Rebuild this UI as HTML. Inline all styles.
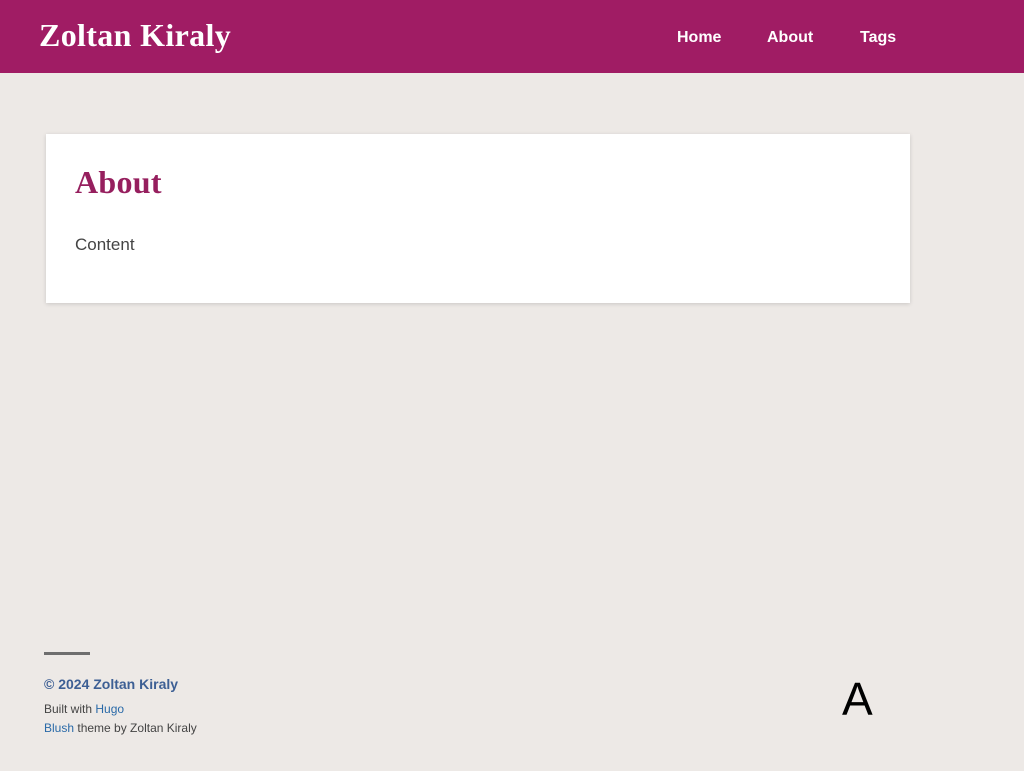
<!DOCTYPE html>
<html><head><meta charset="utf-8"><style>
*{margin:0;padding:0;box-sizing:border-box}
body{width:1024px;height:771px;background:#ede9e6;font-family:"Liberation Sans",sans-serif;position:relative;overflow:hidden}
header{position:absolute;left:0;top:0;width:1024px;height:73px;background:#a01c64}
.logo{position:absolute;left:39px;top:17px;font-family:"Liberation Serif",serif;font-weight:bold;font-size:32px;letter-spacing:.35px;color:#fff}
nav a{position:absolute;top:29px;color:#fff;font-weight:bold;font-size:16px;text-decoration:none}
.card{position:absolute;left:46px;top:134px;width:864px;height:169px;background:#fff;box-shadow:0 1px 4px rgba(0,0,0,.15)}
.card h1{position:absolute;left:29px;top:30px;font-family:"Liberation Serif",serif;font-size:32px;letter-spacing:.3px;font-weight:bold;color:#961f5e}
.card p{position:absolute;left:29px;top:101px;font-size:17px;color:#444}
.rule{position:absolute;left:44px;top:652px;width:46px;height:3px;background:#6e6e6e}
.copy{position:absolute;left:44px;top:676px;font-size:14px;font-weight:bold;color:#3d5f94}
.s{position:absolute;left:44px;font-size:12px;color:#444}
.s a{color:#2a6aa8;text-decoration:none}
.A{position:absolute;left:842px;top:672px;font-size:46px;color:#000}
</style></head><body>
<header><div class="logo">Zoltan Kiraly</div>
<nav><a style="left:677px">Home</a><a style="left:767px">About</a><a style="left:860px">Tags</a></nav></header>
<div class="card"><h1>About</h1><p>Content</p></div>
<div class="rule"></div>
<div class="copy">© 2024 Zoltan Kiraly</div>
<div class="s" style="top:702px">Built with <a>Hugo</a></div>
<div class="s" style="top:721px"><a>Blush</a> theme by Zoltan Kiraly</div>
<div class="A">A</div>
</body></html>
